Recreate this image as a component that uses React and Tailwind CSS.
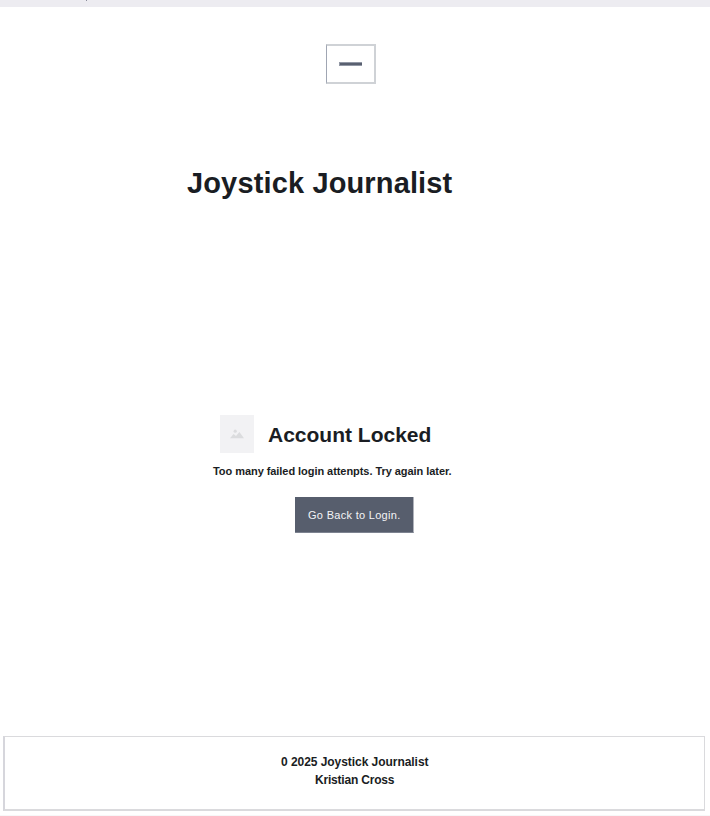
function Header() {
  return (
    <header>
      <div className="h-[7px] bg-[#edecf1]">
        <div className="ml-[86px] h-px w-px bg-[#8b8c9b]" />
      </div>
      <button
        type="button"
        aria-label="Menu"
        className="ml-[326px] mt-[37px] flex h-10 w-[50px] items-center border-2 border-l border-[#cfd2d6] border-l-[#a0a6b3] pl-3"
      >
        <span className="block h-1 w-[23px] border-y border-l border-[#9298a5] bg-[#596070]" />
      </button>
    </header>
  );
}

function LockedNotice() {
  return (
    <section className="mt-[212px]">
      <div className="ml-[220px] flex h-[38px] items-center">
        <div className="flex h-[38px] w-[34px] items-center justify-center bg-[#f2f2f4]">
          <svg width="14" height="10" viewBox="0 0 14 10" fill="#dbdcde">
            <path d="M0 9.2 3.6 5 6 7 9.4 3 14 9.2Z" />
            <circle cx="5.2" cy="2.2" r="1.6" />
          </svg>
        </div>
        <h2 className="ml-[14px] mt-[2px] whitespace-nowrap text-[21px] font-bold leading-6">
          Account Locked
        </h2>
      </div>
      <p className="ml-[213px] mt-[10px] whitespace-nowrap text-[11px] font-bold leading-4 tracking-[-0.055px]">
        Too many failed login attenpts. Try again later.
      </p>
      <button
        type="button"
        className="ml-[295px] mt-[18px] block h-9 w-[119px] whitespace-nowrap border-b border-r border-b-[#7d8390] border-r-[#b0b3bb] bg-[#575e6d] pl-[13px] text-left text-[11px] leading-[37px] tracking-[0.3px] text-[#f3f4f6]"
      >
        Go Back to Login.
      </button>
    </section>
  );
}

function Footer() {
  return (
    <footer className="mt-[203px] border-b border-[#f7f7f8] pb-1 pl-[3px] pr-[5px]">
      <div className="h-[75px] border-b-2 border-l-2 border-r border-t border-[#dadadd] border-l-[#d6d6dc] pt-4 text-[12px] font-bold leading-[18px]">
        <p className="ml-[276px] whitespace-nowrap tracking-[-0.05px]">0 2025 Joystick Journalist</p>
        <p className="ml-[310px] whitespace-nowrap tracking-[-0.2px]">Kristian Cross</p>
      </div>
    </footer>
  );
}

export default function App() {
  return (
    <div className="h-[816px] w-[710px] overflow-hidden bg-white font-['Liberation_Sans',Arial,sans-serif] text-[#1a1d23]">
      <Header />
      <h1 className="ml-[187px] mt-[79px] h-10 whitespace-nowrap text-[29px] font-bold leading-10 tracking-[0.14px]">
        Joystick Journalist
      </h1>
      <LockedNotice />
      <Footer />
    </div>
  );
}
